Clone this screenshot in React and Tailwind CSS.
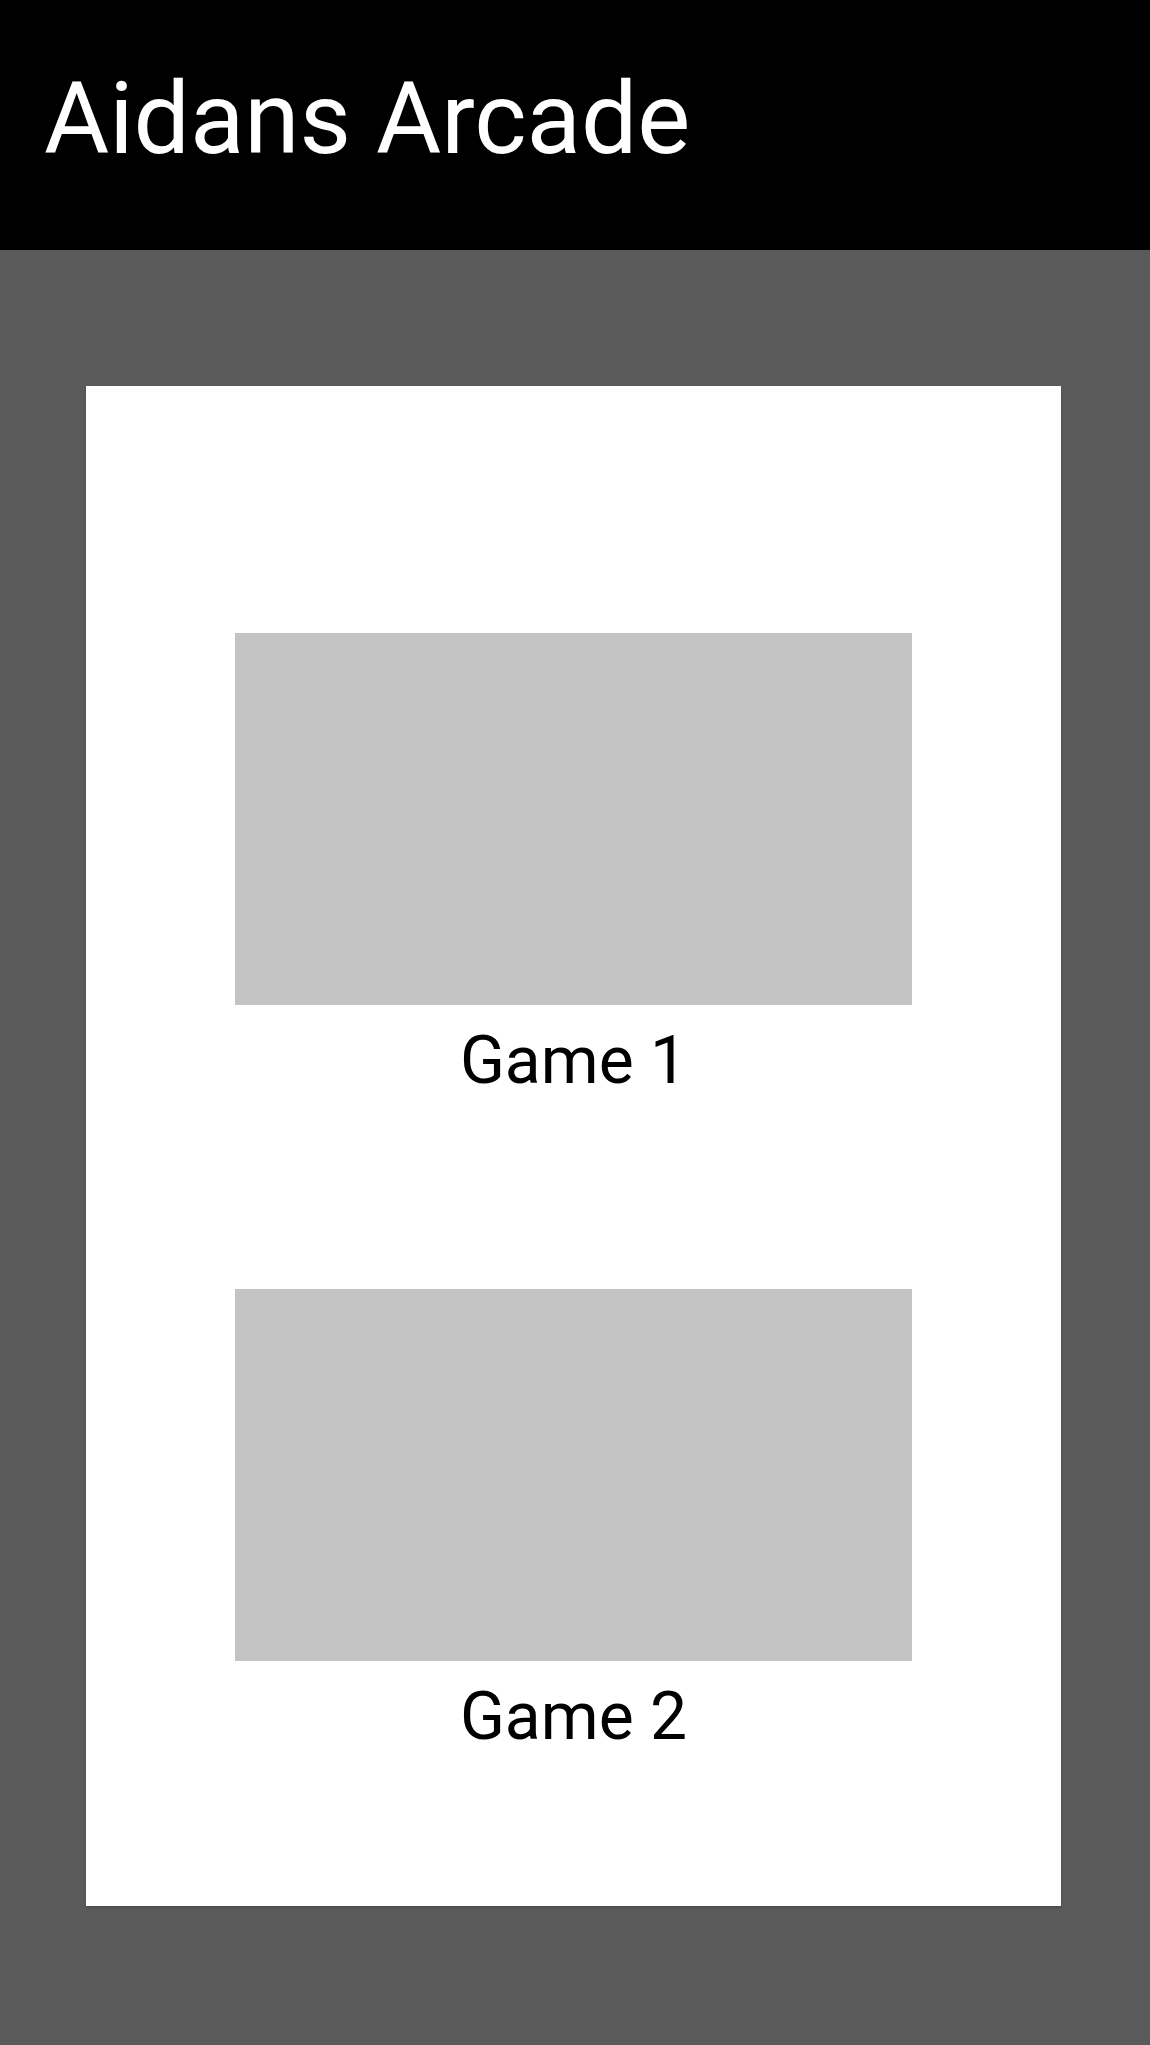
const games = ['Game 1', 'Game 2'];

function GameTile({ title, first }) {
    return (
        <div className={first ? 'flex flex-col items-center' : 'flex flex-col items-center mt-[188px]'}>
            <div className="w-[677px] h-[372px] bg-[#c3c3c3]"></div>
            <div className="mt-[16px] text-[66px] leading-[80px] text-black">{title}</div>
        </div>
    );
}

export default function App() {
    return (
        <div className="min-h-[2045px] bg-[#5a5a5a] font-['Roboto','Liberation_Sans',sans-serif]">
            {/* Header */}
            <header className="h-[250px] bg-black pt-[69px] pl-[44px]">
                <h1 className="text-[100px] leading-none text-white">Aidans Arcade</h1>
            </header>

            {/* Games */}
            <main className="pt-[136px] pb-[139px]">
                <div className="ml-[86px] w-[975px] bg-white pt-[247px] pb-[149px] shadow-[0_2px_2px_rgba(0,0,0,0.15)]">
                    {games.map((g, i) => (
                        <GameTile key={g} title={g} first={i === 0} />
                    ))}
                </div>
            </main>
        </div>
    );
}
